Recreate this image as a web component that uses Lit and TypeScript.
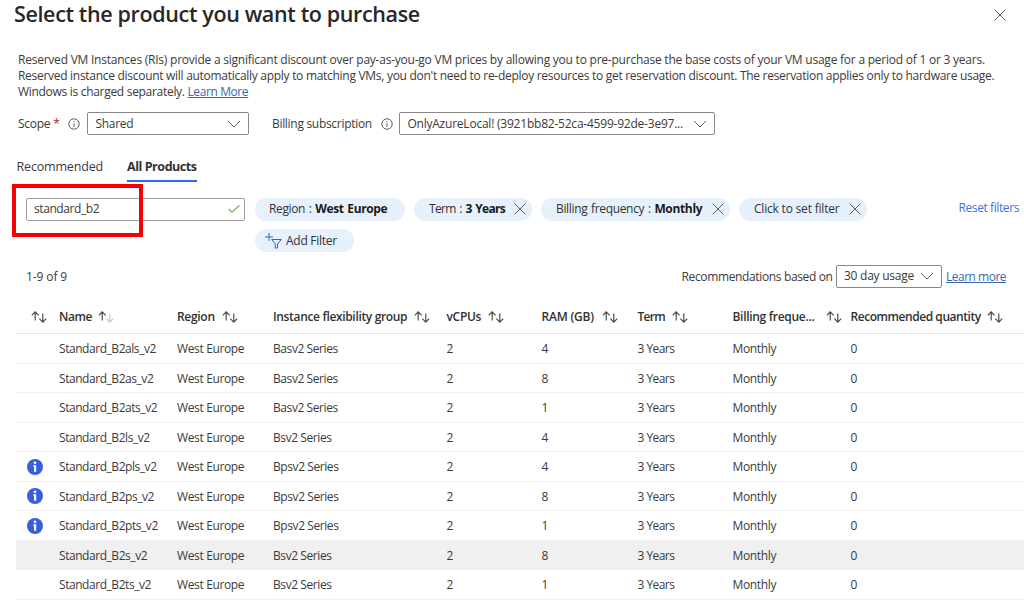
import { LitElement, html, css, svg, nothing } from "lit";
import { customElement } from "lit/decorators.js";
import { classMap } from "lit/directives/class-map.js";

const chevron = html`<svg class="chevron" viewBox="0 0 14 8" width="14" height="8"><path d="M1 1l6 6 6-6" /></svg>`;
const info = html`<svg class="info" viewBox="0 0 12 12" width="12" height="12"><circle cx="6" cy="6" r="5.2" /><path d="M6 5.2v3.6M6 3v1" /></svg>`;
const cross = html`<svg class="cross" viewBox="0 0 12 12" width="12" height="12"><path d="M.6.6l10.8 10.8M11.4.6L.6 11.4" /></svg>`;
const sortIcon = (dim = false) => html`<svg class="sort" viewBox="0 0 16 12" width="16" height="12">
  <path d="M4.2 9.5V1M.8 4.3L4.2.9l3.4 3.4" />
  ${svg`<path class=${dim ? "dim" : ""} d="M11.8 2.5v8.5M8.4 7.7l3.4 3.4 3.4-3.4" />`}
</svg>`;
const badge = html`<svg class="badge" viewBox="0 0 16 16" width="16" height="16"><circle cx="8" cy="8" r="8" fill="#375ee0" /><circle cx="8" cy="3.8" r="1.4" fill="#fff" /><path d="M6.2 6.2H9.2V12.8H7V7.6H6.2z" fill="#fff" /></svg>`;

const rows = [
  ["Standard_B2als_v2", "Basv2 Series", "4", false],
  ["Standard_B2as_v2", "Basv2 Series", "8", false],
  ["Standard_B2ats_v2", "Basv2 Series", "1", false],
  ["Standard_B2ls_v2", "Bsv2 Series", "4", false],
  ["Standard_B2pls_v2", "Bpsv2 Series", "4", true],
  ["Standard_B2ps_v2", "Bpsv2 Series", "8", true],
  ["Standard_B2pts_v2", "Bpsv2 Series", "1", true],
  ["Standard_B2s_v2", "Bsv2 Series", "8", false],
  ["Standard_B2ts_v2", "Bsv2 Series", "1", false],
] as const;

const columns = [
  ["Name", "h-name"], ["Region", "h-region"], ["Instance flexibility group", "h-group"],
  ["vCPUs", "h-cpu"], ["RAM (GB)", "h-ram"], ["Term", "h-term"],
  ["Billing freque...", "h-billing"], ["Recommended quantity", "h-qty"],
];

@customElement("app-root")
export class AppRoot extends LitElement {
  static styles = css`
    :host { display: block; position: relative; width: 1024px; height: 606px; overflow: hidden; background: #fff; color: #3b3a39;
      font: 12px/16px "Open Sans", "Noto Sans", sans-serif; white-space: nowrap; letter-spacing: -0.3px; }
    * { box-sizing: border-box; }
    svg { flex: none; fill: none; stroke: #605e5c; stroke-width: 1; display: block; }
    .badge { stroke: none; }
    .head { height: 52px; display: flex; justify-content: space-between; padding: 0 18px 0 14px; }
    h1 { margin: 0; font-size: 21.5px; line-height: 28px; font-weight: 600; color: #292827; letter-spacing: -0.36px; }
    .head .cross { margin-top: 9px; }
    .intro { padding-left: 18px; height: 60px; line-height: 15.6px; padding-top: 0.4px; }
    .line { display: block; }
    .l1 { letter-spacing: -0.23px; }
    .l2 { letter-spacing: -0.288px; }
    a { color: #3868b0; text-decoration: underline; text-underline-offset: 1px; letter-spacing: -0.5px; }
    .intro a { letter-spacing: -0.4px; }
    .form { display: flex; align-items: center; height: 23px; padding-left: 18px; }
    .req { color: #a4262c; margin-left: 3px; }
    .form .info { margin-left: 9px; }
    .select { height: 23px; border: 1px solid #8a8886; border-radius: 2px; display: flex; align-items: center; justify-content: space-between; padding: 0 7px; background: #fff; }
    .scope { width: 162px; margin-left: 7px; }
    .bill { margin-left: 22.5px; letter-spacing: -0.3px; }
    .sub { width: 316px; margin-left: 6.5px; }
    .subtext { letter-spacing: -0.22px; }
    .tabs { display: flex; gap: 24px; padding-left: 16.5px; height: 63px; padding-top: 21px; }
    .tab { height: 26px; line-height: 20px; padding-top: 1px; font-size: 12.5px; letter-spacing: -0.17px; }
    .tab.on { font-weight: 700; border-bottom: 2px solid #2f6be0; color: #323130; letter-spacing: -0.45px; }
    .filters { display: flex; height: 62px; padding-left: 26px; }
    .search { width: 219px; height: 22.5px; border: 1px solid #a19f9d; border-radius: 2px; display: flex; align-items: center; justify-content: space-between; padding: 0 4px 0 7px; }
    .search span { letter-spacing: -0.42px; }
    .check { stroke: #84b84c; stroke-width: 1.3; }
    .pills { display: flex; flex-wrap: wrap; gap: 8px 9px; width: 640px; margin-left: 10px; align-content: flex-start; }
    .pill { height: 23px; border-radius: 12px; background: #e6f1fc; display: flex; align-items: center; padding: 0 6px 1px 14px; justify-content: space-between; color: #323130; }
    .pill b { color: #1b1a19; }
    .p1 { width: 150px; letter-spacing: -0.38px; word-spacing: 1px; }
    .p2 { width: 118px; padding-left: 15px; letter-spacing: -0.65px; word-spacing: 1.1px; }
    .p3 { width: 189px; padding-left: 15px; letter-spacing: -0.34px; word-spacing: 0.9px; }
    .p4 { width: 128px; padding-left: 15px; letter-spacing: -0.2px; }
    .p5 { width: 99px; padding: 0 0 0 10px; justify-content: flex-start; gap: 4px; letter-spacing: -0.27px; }
    .reset { color: #3b74e0; margin-left: 63.5px; line-height: 20px; letter-spacing: -0.4px; }
    .summary { height: 38px; display: flex; align-items: flex-start; padding-left: 26px; margin-top: 4.5px; }
    .count { margin: 4.5px 0 0; width: 655.5px; letter-spacing: -0.1px; }
    .recs { width: 154.5px; margin-top: 4.5px; letter-spacing: -0.36px; }
    .usage { width: 106px; letter-spacing: -0.25px; }
    .more { margin: 4.5px 0 0 4px; }
    .row { display: grid; grid-template-columns: 43px 118px 96px 173.5px 95px 96px 95px 118px 1fr; margin-left: 16px; align-items: center; height: 29.5px; padding-top: 2px; border-bottom: 1px solid #f0f0f0; }
    .row.hot { background: #f0f0f0; }
    .thead { height: 31.5px; padding: 0 0 1px; font-weight: 600; color: #323130; border-color: #e6e5e4; }
    .th { display: flex; align-items: center; gap: 6.5px; }
    .first { padding-left: 14.5px; }
    .sort { stroke: #484644; stroke-width: 1.15; }
    .dim { stroke: #c8c6c4; }
    .h-name { letter-spacing: -0.45px; }
    .h-region { gap: 7.5px; }
    .h-term { letter-spacing: -0.7px; }
    .h-ram { letter-spacing: -0.2px; gap: 8px; }
    .h-group { letter-spacing: -0.34px; gap: 7px; }
    .h-qty { letter-spacing: -0.45px; }
    .h-billing .sort { margin-left: 5px; }
    .ico { padding-left: 11px; margin-top: -1px; }
    .name { letter-spacing: -0.45px; }
    .region, .month { letter-spacing: -0.36px; }
    .group { letter-spacing: -0.42px; }
    .term { letter-spacing: -0.55px; }
    .mark { position: absolute; left: 12px; top: 184px; width: 131px; height: 53px; border: 4px solid #fb0000; }
  `;

  render() {
    return html`
      <div class="head"><h1>Select the product you want to purchase</h1>${cross}</div>
      <div class="intro">
        <span class="line l1">Reserved VM Instances (RIs) provide a significant discount over pay-as-you-go VM prices by allowing you to pre-purchase the base costs of your VM usage for a period of 1 or 3 years.</span>
        <span class="line l2">Reserved instance discount will automatically apply to matching VMs, you don't need to re-deploy resources to get reservation discount. The reservation applies only to hardware usage.</span>
        <span class="line l3">Windows is charged separately. <a>Learn More</a></span>
      </div>
      <div class="form">
        <span class="lbl1">Scope</span><span class="req">*</span>${info}
        <div class="select scope"><span>Shared</span>${chevron}</div>
        <span class="bill">Billing subscription</span>${info}
        <div class="select sub"><span class="subtext">OnlyAzureLocal! (3921bb82-52ca-4599-92de-3e97...</span>${chevron}</div>
      </div>
      <div class="tabs"><div class="tab t1">Recommended</div><div class="tab on">All Products</div></div>
      <div class="filters">
        <div class="search"><span>standard_b2</span><svg class="check" viewBox="0 0 12 8" width="12" height="8"><path d="M.8 4l3.2 3.2L11.3.6" /></svg></div>
        <div class="pills">
          <div class="pill p1"><span>Region : <b>West Europe</b></span></div>
          <div class="pill p2"><span>Term : <b>3 Years</b></span>${cross}</div>
          <div class="pill p3"><span>Billing frequency : <b>Monthly</b></span>${cross}</div>
          <div class="pill p4"><span>Click to set filter</span>${cross}</div>
          <div class="pill p5"><svg class="addf" viewBox="0 0 17 16" width="17" height="16"><path stroke="#375ee0" d="M4 0v8M0 4h8M6.7 6.5h9.6L12.5 11v4H10.3v-4z" /></svg><span>Add Filter</span></div>
        </div>
        <span class="reset">Reset filters</span>
      </div>
      <div class="summary">
        <p class="count"><span>1-9 of 9</span></p><span class="recs">Recommendations based on</span>
        <div class="select usage"><span>30 day usage</span>${chevron}</div><a class="more">Learn more</a>
      </div>
      <div class="row thead">
        <span class="first">${sortIcon()}</span>
        ${columns.map(([label, cls], i) => html`<div class="th ${cls}"><span>${label}</span>${sortIcon(i === 0)}</div>`)}
      </div>
      ${rows.map(([name, group, ram, note], i) => html`<div class=${classMap({ row: true, hot: i === 7 })}>
        <span class="ico">${note ? badge : nothing}</span><span class="name">${name}</span><span class="region">West Europe</span><span class="group">${group}</span>
        <span>2</span><span>${ram}</span><span class="term">3 Years</span><span class="month">Monthly</span><span>0</span>
      </div>`)}
      <div class="mark"></div>
    `;
  }
}
